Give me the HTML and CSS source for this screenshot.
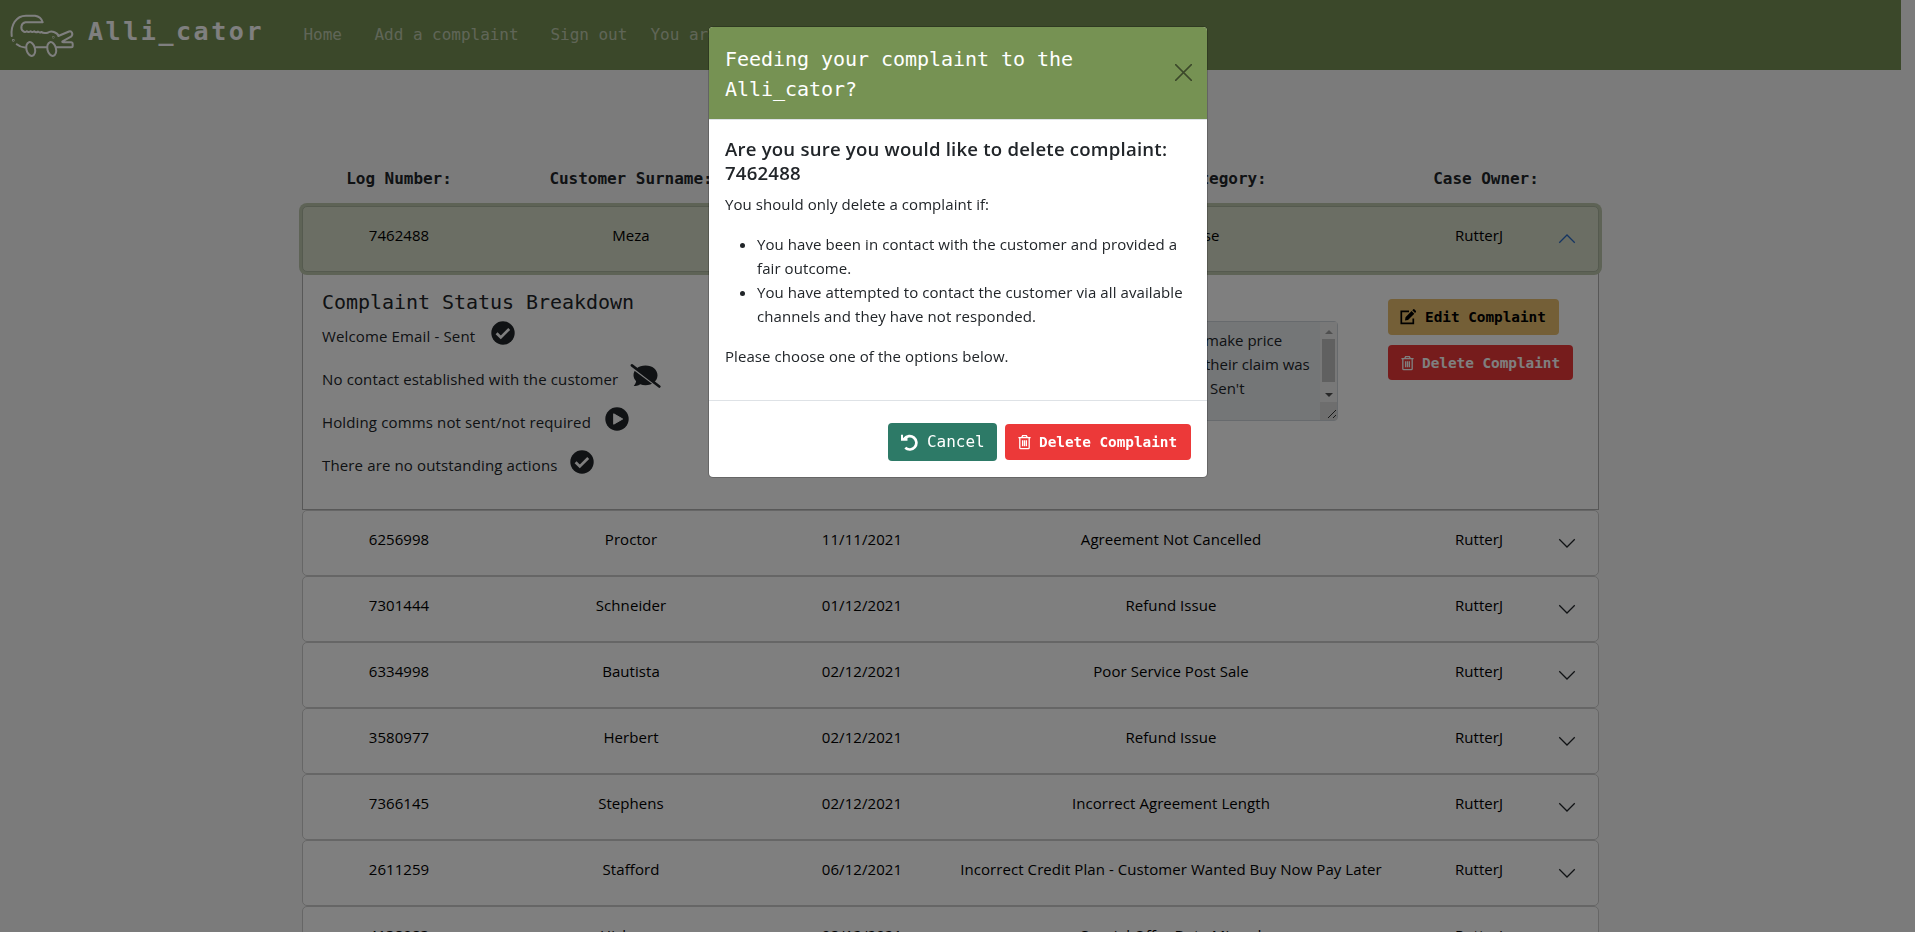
FILE: index.html
```html
<!DOCTYPE html>
<html lang="en">
<head>
<meta charset="utf-8">
<title>Alli_cator</title>
<link rel="stylesheet" href="styles.css">
</head>
<body>
<svg class="defs" width="0" height="0">
  <symbol id="down" viewBox="0 0 16 16"><path d="M1.8 5l6.2 6.2L14.2 5" fill="none" stroke="currentColor" stroke-width="1"/></symbol>
  <symbol id="check" viewBox="0 0 24 24"><circle cx="12" cy="12" r="11.7" fill="currentColor"/><path d="M5.6 12.2l4.2 4.2 8.4-8.4" fill="none" stroke="#fff" stroke-width="2.7"/></symbol>
  <symbol id="trash" viewBox="0 0 16 16"><path d="M1.500 3.400h13M5 3.200l1-2h4l1 2M3 3.600v10.400q0 1 1 1h8q1 0 1-1V3.600M6 6v6.500M8 6v6.500M10 6v6.500" fill="none" stroke="currentColor" stroke-width="1.400"/></symbol>
</svg>
<nav class="navbar">
  <svg class="logo" viewBox="0 0 68 48" width="68" height="48" fill="none" stroke="#fff" stroke-width="2" stroke-linecap="round" stroke-linejoin="round">
    <path d="M3.700 24C2.500 13 8 3.700 18 3.700h9q6 .8 7.700 6.600H17.500c-4.500.6-5.500 6.500-2.200 9q1.500 1.500 3.500 0 1.700 1.500 3.700 0 1.700 1.500 3.700 0 1.700 1.700 3.700.300 1.700 1.500 3.700.400 1.500 1.500 6.100.700Q42.500 18.500 46 20q4 1.500 4.300 4L61 19.500q2-.8 3 1.200 1 2.300-1 4l-8.500 4.600q-.8 1 .7 1h8q1.500.2 1.500 1.500v2q0 1.500-1.500 1.500H48.500"/>
    <path d="M8.700 32.300q3.500 3 8.300 3.200M28 35.300h10.500"/>
    <ellipse cx="22.700" cy="37" rx="4.300" ry="7" transform="rotate(-14 22.700 37)"/>
    <ellipse cx="43.700" cy="37" rx="4.300" ry="7" transform="rotate(-14 43.700 37)"/>
    <circle cx="5.300" cy="28.300" r=".4"/><circle cx="45.300" cy="25.300" r=".2"/>
  </svg>
  <span class="brand">Alli_cator</span>
  <span class="link home">Home</span>
  <span class="link add">Add a complaint</span>
  <span class="link out">Sign out</span>
  <span class="link who">You are signed in as: RutterJ</span>
</nav>
<main class="container">
  <div class="cols head"><span>Log Number:</span><span>Customer Surname:</span><span>Date:</span><span class="cat-head">Complaint Category:</span><span class="owner-head">Case Owner:</span></div>
  <section class="row cols open"><span>7462488</span><span>Meza</span><span>10/11/2021</span><span>Price Promise</span><span>RutterJ</span><svg class="chev"><use href="#down"/></svg></section>
  <section class="detail">
    <div class="status">
      <h5>Complaint Status Breakdown</h5>
      <p><span class="s1">Welcome Email - Sent</span><svg class="ico"><use href="#check"/></svg></p>
      <p><span class="s2">No contact established with the customer</span>
        <svg class="ico wide" viewBox="0 0 30 24"><path d="M15 1.500c7 0 12 4.200 12 9.800s-5 9.900-12 9.900c-2 0-3.700-.4-5.200-1C7.500 21.700 5 22 3.200 22c1.300-1.700 2.300-3.300 2.400-4.700C4 15.500 3 13.500 3 11.300c0-5.600 5-9.800 12-9.800z" fill="currentColor"/><path d="M1 3l28 21" stroke="#fff" stroke-width="2.200"/><path d="M1.400 1.400L28.800 22.500" stroke="currentColor" stroke-width="2.600" stroke-linecap="round"/></svg></p>
      <p><span class="s3">Holding comms not sent/not required</span>
        <svg class="ico" viewBox="0 0 24 24"><circle cx="12" cy="12" r="11.700" fill="currentColor"/><path d="M8.700 6.800v10.400l9-5.200z" fill="#fff" stroke="#fff" stroke-linejoin="round"/></svg></p>
      <p><span class="s4">There are no outstanding actions</span><svg class="ico"><use href="#check"/></svg></p>
    </div>
    <div class="notes">
      <div class="note-text"><div>make price</div><div>their claim was</div><div class="third">Sen't</div></div>
      <div class="scroll"><i class="up"></i><i class="thumb"></i><i class="dn"></i>
        <svg class="grip" viewBox="0 0 17 18"><path d="M8 16l8-8M13 16l3-3" stroke="#333"/></svg></div>
    </div>
    <div class="actions">
      <span class="btn edit"><svg class="bi" viewBox="0 0 16 16"><path d="M9 2.300H1.300v12h12V9.500" fill="none" stroke="currentColor" stroke-width="1.700"/><path d="M5 11.500l.5-3.200L11.600 2l2.700 2.700L8 11z M12.300 1.300l1-1q.5-.5 1 0l1.700 1.700q.4.500 0 1l-1 1z" fill="currentColor"/></svg>Edit Complaint</span>
      <span class="btn del"><svg class="bi"><use href="#trash"/></svg>Delete Complaint</span>
    </div>
  </section>
  <section class="row cols"><span>6256998</span><span>Proctor</span><span>11/11/2021</span><span>Agreement Not Cancelled</span><span>RutterJ</span><svg class="chev"><use href="#down"/></svg></section>
  <section class="row cols"><span>7301444</span><span>Schneider</span><span>01/12/2021</span><span>Refund Issue</span><span>RutterJ</span><svg class="chev"><use href="#down"/></svg></section>
  <section class="row cols"><span>6334998</span><span>Bautista</span><span>02/12/2021</span><span>Poor Service Post Sale</span><span>RutterJ</span><svg class="chev"><use href="#down"/></svg></section>
  <section class="row cols"><span>3580977</span><span>Herbert</span><span>02/12/2021</span><span>Refund Issue</span><span>RutterJ</span><svg class="chev"><use href="#down"/></svg></section>
  <section class="row cols"><span>7366145</span><span>Stephens</span><span>02/12/2021</span><span>Incorrect Agreement Length</span><span>RutterJ</span><svg class="chev"><use href="#down"/></svg></section>
  <section class="row cols"><span>2611259</span><span>Stafford</span><span>06/12/2021</span><span>Incorrect Credit Plan - Customer Wanted Buy Now Pay Later</span><span>RutterJ</span><svg class="chev"><use href="#down"/></svg></section>
  <section class="row cols"><span>4138083</span><span>Hickman</span><span>08/12/2021</span><span>Special Offer Date Missed</span><span>RutterJ</span><svg class="chev"><use href="#down"/></svg></section>
</main>
<div class="backdrop">
  <div class="modal">
    <header class="m-head"><h5>Feeding your complaint to the Alli_cator?</h5><svg class="x" viewBox="0 0 16 16"><path d="M.6.6l14.800 14.800M15.400.6L.6 15.400" stroke="#3b482a" stroke-width="1.400" stroke-linecap="round"/></svg></header>
    <div class="m-body">
      <h5>Are you sure you would like to delete complaint: 7462488</h5>
      <p>You should only delete a complaint if:</p>
      <ul>
        <li>You have been in contact with the customer and provided a<br>fair outcome.</li>
        <li>You have attempted to contact the customer via all available<br>channels and they have not responded.</li>
      </ul>
      <p>Please choose one of the options below.</p>
    </div>
    <footer class="m-foot">
      <span class="btn cancel"><svg class="bi" viewBox="0 0 16 16"><path d="M3.200 4.400A6.300 6.300 0 1 1 4 13" fill="none" stroke="currentColor" stroke-width="2.500"/><path d="M0 .8h1.900v3h4.200v2.500H0z" fill="currentColor"/></svg>Cancel</span>
      <span class="btn del"><svg class="bi"><use href="#trash"/></svg>Delete Complaint</span>
    </footer>
  </div>
</div>
</body>
</html>
```
FILE: styles.css
```css
* { box-sizing: border-box; }
html { height: 100%; overflow: hidden; }
body {
  margin: 0;
  height: 932px;
  overflow: hidden;
  padding-right: 14px;
  background: #f7f7f7;
  color: #212529;
  font: 15px/24px "Open Sans", "Noto Sans", sans-serif;
  letter-spacing: .07px;
}
h5, p, ul { margin: 0; }
.defs { display: none; }

.navbar {
  height: 70px;
  background: #779154;
  display: flex;
  padding-left: 8px;
  color: #fff;
  font-family: "DejaVu Sans Mono", monospace;
  white-space: nowrap;
  overflow: hidden;
}
.logo { margin-top: 12px; flex: none; }
.brand { width: 226px; margin-left: 12px; padding-top: 15px; font-size: 25px; line-height: 34px; font-weight: 700; letter-spacing: 2.55px; }
.link { padding-top: 23px; font-size: 16px; color: rgba(255, 255, 255, .55); letter-spacing: -.03px; flex: none; }
.home { width: 71px; margin-left: -10.5px; }
.add { width: 176px; }
.out { width: 100px; }

.container { width: 1297px; margin-left: 302px; }
.cols {
  display: grid;
  grid-template-columns: 192px 272px 190px 428px 188px;
  text-align: center;
  white-space: nowrap;
}
.head {
  padding: 97px 0 15px 1px;
  height: 136px;
  font: 700 16px/24px "DejaVu Sans Mono", monospace;
  letter-spacing: -.03px;
}
.cat-head { padding-left: 9px; }
.owner-head { padding-left: 14px; }
.row {
  position: relative;
  height: 66px;
  padding-top: 16px;
  border: 1px solid #cdcdcd;
  border-radius: 5px;
  background: #fff;
  color: #000;
}
.open { background: #d6dcc9; border-color: #aab49e; box-shadow: 0 0 0 3px #bcc6ad; }
.chev { position: absolute; right: 21px; top: 22px; width: 20px; height: 20px; color: #212529; }
.open .chev { transform: rotate(180deg); color: #2a6ac4; }

.detail {
  height: 238px;
  border: 1px solid #b0b0b0;
  background: #fff;
  display: flex;
  padding-left: 19px;
}
.status { width: 618px; padding-top: 17px; }
.status h5 { font: 400 20px/24px "DejaVu Sans Mono", monospace; letter-spacing: -.04px; }
.status p { height: 43px; display: flex; padding-top: 6px; }
.status p:first-of-type { margin-top: 1px; }
.status span { padding-top: 3px; white-space: nowrap; letter-spacing: .14px; }
.s1 { width: 169px; }
.s2 { width: 308px; }
.s3 { width: 283px; }
.s4 { width: 248px; }
.ico { width: 24px; height: 24px; flex: none; }
.wide { width: 31px; }
.notes {
  display: flex;
  justify-content: space-between;
  width: 398px;
  height: 100px;
  margin-top: 48px;
  border: 1px solid #ced4da;
  border-radius: 4px;
  background: #e9ecef;
}
.note-text { padding: 6px 0 0 264px; white-space: nowrap; letter-spacing: 0; }
.third { padding-left: 5px; }
.scroll { width: 17px; background: #f1f1f1; display: flex; flex-direction: column; align-items: center; }
.up, .dn { border: 4px solid transparent; }
.up { border-bottom-color: #a0a0a0; border-top: 0; margin-top: 8px; }
.thumb { width: 13px; height: 43px; background: #c1c1c1; margin-top: 5px; }
.dn { border-top-color: #505050; border-bottom: 0; margin-top: 11px; }
.grip { width: 17px; height: 18px; background: #dcdcdc; margin-top: auto; }
.actions { display: flex; flex-direction: column; align-items: flex-start; gap: 10px; padding: 26px 0 0 50px; }

.btn {
  display: inline-flex;
  align-items: center;
  height: 36px;
  padding-left: 12px;
  border-radius: 4px;
  font: 700 14.4px/20px "DejaVu Sans Mono", monospace;
  letter-spacing: -.03px;
  white-space: nowrap;
  color: #fff;
}
.bi { width: 16px; height: 16px; margin-right: 9px; }
.edit { width: 171px; background: #e8be6e; color: #000; }
.del { width: 186px; background: #ec3939; }
.del .bi { width: 15px; margin-right: 7px; }
.actions .del { width: 185px; height: 35px; }

.backdrop { position: fixed; inset: 0; background: rgba(0, 0, 0, .5); padding-top: 26px; }
.modal {
  width: 500px;
  height: 452px;
  margin-left: 708px;
  border: 1px solid rgba(0, 0, 0, .2);
  border-radius: 5px;
  background: #fff;
  background-clip: padding-box;
  overflow: hidden;
}
.m-head { height: 93px; padding: 16px; display: flex; justify-content: space-between; background: #769253; border-bottom: 1px solid #dee2e6; }
.m-head h5 { width: 360px; padding-top: 1px; font: 400 20px/30px "DejaVu Sans Mono", monospace; letter-spacing: -.04px; color: #fff; }
.x { width: 17px; height: 17px; margin: 21px -1px 0 0; }
.m-body { padding: 16px; height: 280px; }
.m-body h5 { font-size: 18.6px; line-height: 24px; font-weight: 600; letter-spacing: .2px; padding-top: 1px; margin-bottom: 7px; }
.m-body p, .m-body ul { margin-bottom: 16px; }
.m-body ul { padding-left: 32px; white-space: nowrap; letter-spacing: .08px; }
.m-foot { display: flex; justify-content: flex-end; align-items: center; gap: 8px; height: 77px; padding: 6px 16px 0; border-top: 1px solid #dee2e6; }
.cancel { width: 109px; height: 38px; font-size: 16px; font-weight: 400; background: #2d7a67; padding-left: 13px; }
.cancel .bi { width: 17px; height: 17px; }
```
